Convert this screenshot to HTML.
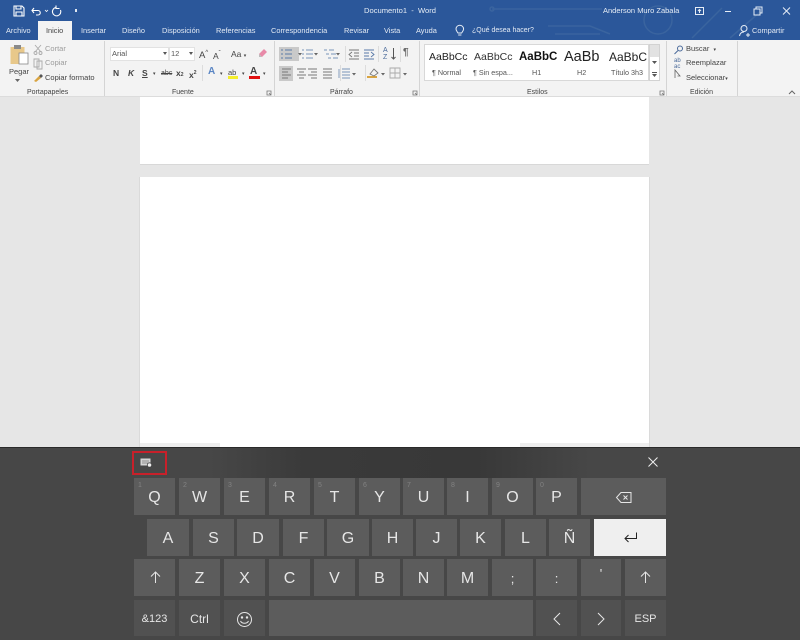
<!DOCTYPE html>
<html lang="es"><head><meta charset="utf-8"><title>Documento1 - Word</title>
<style>
*{box-sizing:border-box}
html,body{margin:0;padding:0;width:800px;height:640px;overflow:hidden;background:#e6e6e6;font-family:"Liberation Sans",sans-serif}
.a{position:absolute;white-space:nowrap}
#tb{position:absolute;left:0;top:0;width:800px;height:40px;background:#2b579a}
.t{position:absolute;top:25px;font-size:7.4px;color:#e3eaf4;line-height:11px;white-space:nowrap}
#rb{position:absolute;left:0;top:40px;width:800px;height:57px;background:#f3f3f3;border-bottom:1px solid #dcdcdc}
.s{position:absolute;top:41px;width:1px;height:55px;background:#d4d4d4}
.r{position:absolute;font-size:7.5px;color:#444;line-height:10px;white-space:nowrap}
.g{position:absolute;top:88px;font-size:7px;color:#444;line-height:10px;white-space:nowrap}
.k{position:absolute;height:37px;background:#5c5c5c;color:#e6e6e6;text-align:center;font-size:16px;line-height:39px}
.d{background:#515151}
.k i{position:absolute;left:4px;top:3px;font-size:7px;line-height:9px;font-style:normal;color:#828282}
svg{position:absolute;overflow:visible}
</style></head><body>

<div class="a" style="left:140px;top:97px;width:509px;height:68px;background:#fff;border-bottom:1px solid #d8d8d8"></div>
<div class="a" style="left:140px;top:177px;width:509px;height:270px;background:#fff"></div>
<div class="a" style="left:139px;top:177px;width:1px;height:270px;background:#dadada"></div>
<div class="a" style="left:649px;top:177px;width:1px;height:270px;background:#dadada"></div>
<div class="a" style="left:140px;top:443px;width:80px;height:4px;background:#eee"></div>
<div class="a" style="left:520px;top:443px;width:129px;height:4px;background:#eee"></div>

<div id="tb"></div>
<svg style="left:0;top:0" width="800" height="40" fill="none" stroke="#3a649f" stroke-width="1.5"><path d="M492 9H602M548 26H590L610 34M555 34H600M722 8L692 38M760 12L730 38"/><circle cx="658" cy="20" r="14"/><circle cx="492" cy="9" r="2"/></svg>
<svg style="left:13px;top:5px" width="60" height="12" fill="none" stroke="#fff" stroke-width="1.1"><path d="M1 1H9L11 3V11H1ZM3 1V4H8V1M3 11V7H9V11"/><path d="M21 3L19 5.500L21 8M19 5.500H25C28 5.500 28 10 25 10H23"/><path d="M32 5L33.500 6.500L35 5" stroke-width=".8"/><path d="M43 2.500A4.200 4.200 0 1 0 47.500 5M43 0.500V3.500H46.500"/></svg>
<div class="a" style="left:75px;top:9px;width:2px;height:3px;background:#dfe7f2"></div>
<div class="a" style="left:364px;top:5px;font-size:7.6px;line-height:11px;color:#e6edf6">Documento1 &nbsp;-&nbsp; Word</div>
<div class="a" style="left:603px;top:5px;font-size:7.5px;line-height:11px;color:#e6edf6">Anderson Muro Zabala</div>
<svg style="left:695px;top:5px" width="96" height="12" fill="none" stroke="#e6edf6" stroke-width="1"><path d="M0.500 2.500H8.500V9.500H0.500ZM4.500 8V4.500M3 6L4.500 4.500L6 6"/><path d="M30 6.500H36"/><path d="M59 4H65V10H59ZM61 4V2H67V8H65"/><path d="M88 2.500L95 9.500M95 2.500L88 9.500"/></svg>

<div class="a" style="left:38px;top:21px;width:34px;height:20px;background:#f3f3f3"></div>
<div class="t" style="left:6px">Archivo</div>
<div class="t" style="left:46px;color:#444">Inicio</div>
<div class="t" style="left:81px">Insertar</div>
<div class="t" style="left:122px">Diseño</div>
<div class="t" style="left:162px">Disposición</div>
<div class="t" style="left:216px">Referencias</div>
<div class="t" style="left:271px">Correspondencia</div>
<div class="t" style="left:344px">Revisar</div>
<div class="t" style="left:384px">Vista</div>
<div class="t" style="left:416px">Ayuda</div>
<svg style="left:455px;top:25px" width="10" height="12" fill="none" stroke="#e6edf6" stroke-width="1"><path d="M3 8C2 6.500 1 5.500 1 4A3.800 3.800 0 0 1 8.600 4C8.600 5.500 7.600 6.500 6.600 8ZM3.200 10H6.400"/></svg>
<div class="t" style="left:472px;font-size:7px">¿Qué desea hacer?</div>
<svg style="left:739px;top:25px" width="12" height="12" fill="none" stroke="#e6edf6" stroke-width="1"><circle cx="5" cy="3.500" r="3"/><path d="M0.500 11C1 8 3 7 5 7M7 10H11M9 8V12"/></svg>
<div class="t" style="left:752px">Compartir</div>

<div id="rb"></div>
<div class="s" style="left:104px"></div><div class="s" style="left:274px"></div><div class="s" style="left:419px"></div><div class="s" style="left:666px"></div><div class="s" style="left:737px"></div>

<!-- Portapapeles -->
<svg style="left:9px;top:44px" width="22" height="24"><rect x="1.500" y="3" width="14" height="17" fill="#e8c88a"/><rect x="5" y="1" width="7" height="4" fill="#8a8a8a"/><rect x="10" y="9" width="9" height="11" fill="#fff" stroke="#888" stroke-width=".8"/></svg>
<div class="r" style="left:9px;top:67px">Pegar</div>
<svg style="left:15px;top:79px" width="6" height="4"><path d="M0 0H5L2.500 3Z" fill="#666"/></svg>
<svg style="left:33px;top:44px" width="11" height="40" fill="none" stroke="#aaa" stroke-width=".9"><path d="M2 1L8 8M8 1L2 8"/><circle cx="2.500" cy="9" r="1.500"/><circle cx="7.500" cy="9" r="1.500"/><path d="M1 15H6V23H1ZM4 17H9V25H4Z"/></svg>
<div class="r" style="left:45px;top:44px;color:#9c9c9c">Cortar</div>
<div class="r" style="left:45px;top:58px;color:#9c9c9c">Copiar</div>
<svg style="left:33px;top:73px" width="11" height="10"><path d="M1 8L6 3L8 5L3 9Z" fill="#d9a441"/><path d="M6 3L8 1L10 3L8 5Z" fill="#555"/></svg>
<div class="r" style="left:45px;top:73px">Copiar formato</div>
<div class="g" style="left:27px">Portapapeles</div>

<!-- Fuente -->
<div class="a" style="left:110px;top:47px;width:59px;height:14px;background:#fff;border:1px solid #e2e2e2;font-size:7.500px;line-height:12px;padding-left:1px;color:#555">Arial</div>
<div class="a" style="left:169px;top:47px;width:26px;height:14px;background:#fff;border:1px solid #e2e2e2;font-size:7.500px;line-height:12px;padding-left:1px;color:#555">12</div>
<svg style="left:163px;top:52px" width="30" height="4" fill="#555"><path d="M0 0H4L2 3Z"/><path d="M26 0H30L28 3Z"/></svg>
<div class="r" style="left:199px;top:48px;font-size:9.500px">A<span style="font-size:6px;vertical-align:4px">^</span></div>
<div class="r" style="left:213px;top:49px;font-size:8.500px">A<span style="font-size:6px;vertical-align:4px">ˇ</span></div>
<div class="r" style="left:231px;top:49px;font-size:8.500px">Aa <span style="font-size:5px">▾</span></div>
<svg style="left:257px;top:47px" width="12" height="12"><path d="M2 7L7 2L10 5L5 10Z" fill="#e88aa8"/><path d="M2 7L5 10H2Z" fill="#bbb"/></svg>
<div class="r" style="left:113px;top:68px;font-weight:bold;font-size:8.500px">N</div>
<div class="r" style="left:128px;top:68px;font-weight:bold;font-style:italic;font-size:8.500px">K</div>
<div class="r" style="left:142px;top:68px;font-weight:bold;font-size:8.500px;text-decoration:underline">S</div>
<div class="r" style="left:153px;top:69px;font-size:5px">▾</div>
<div class="r" style="left:161px;top:69px;font-size:7px;text-decoration:line-through">abc</div>
<div class="r" style="left:176px;top:68px;font-size:8.500px;font-weight:bold">x<span style="font-size:5px">2</span></div>
<div class="r" style="left:189px;top:68px;font-size:8.500px;font-weight:bold">x<span style="font-size:5px;vertical-align:4px">2</span></div>
<div class="a" style="left:202px;top:65px;width:1px;height:16px;background:#dcdcdc"></div>
<div class="r" style="left:208px;top:67px;font-size:10px;color:#5b86c4;font-weight:bold">A</div>
<div class="r" style="left:220px;top:69px;font-size:5px">▾</div>
<div class="r" style="left:228px;top:68px;font-size:7.500px;text-decoration:underline">ab</div>
<div class="a" style="left:228px;top:76px;width:10px;height:3px;background:#f5ee2a"></div>
<div class="r" style="left:242px;top:69px;font-size:5px">▾</div>
<div class="r" style="left:250px;top:67px;font-size:10px;font-weight:bold;color:#444">A</div>
<div class="a" style="left:249px;top:76px;width:11px;height:3px;background:#e01010"></div>
<div class="r" style="left:263px;top:69px;font-size:5px">▾</div>
<div class="g" style="left:172px">Fuente</div>
<svg style="left:266px;top:90px" width="40" height="6" fill="none" stroke="#777" stroke-width=".8"><path d="M1 1H5V5H1ZM3 3L5 5"/></svg>

<!-- Parrafo -->
<div class="a" style="left:279px;top:47px;width:20px;height:14px;background:#c9c9c9"></div>
<div class="a" style="left:279px;top:66px;width:14px;height:15px;background:#c9c9c9"></div>
<svg style="left:280px;top:48px" width="140" height="33" fill="none" stroke="#777" stroke-width=".9">
<path d="M1 2H3M5 2H12M1 6H3M5 6H12M1 10H3M5 10H12" stroke="#5a7aa8"/>
<path d="M22 2H24M26 2H33M22 6H24M26 6H33M22 10H24M26 10H33" stroke="#7a94b8"/>
<path d="M44 2H47M49 2H54M46 6H49M51 6H56M48 10H51M53 10H58" stroke="#7a94b8"/>
<path d="M69 2H79M74 5H79M74 8H79M69 11H79M72 4L69 6.500L72 9"/>
<path d="M84 2H94M84 5H89M84 8H89M84 11H94M91 4L94 6.500L91 9" stroke="#5a7aa8"/>
<path d="M2 21H11M2 24H8M2 27H11M2 30H8"/><path d="M17 21H26M19 24H24M17 27H26M19 30H24"/><path d="M28 21H37M31 24H37M28 27H37M31 30H37"/><path d="M43 21H52M43 24H52M43 27H52M43 30H52"/>
<path d="M62 21H70M62 24H70M62 27H70M62 30H70M59 21V30" stroke="#7a94b8"/>
<path d="M87 29H97" stroke="#d9a441" stroke-width="2"/><path d="M90 26L94 21L98 25L94 28Z"/>
<path d="M110 20H120V30H110ZM115 20V30M110 25H120" stroke="#aaa"/>
</svg>
<svg style="left:0;top:0" width="420" height="90" fill="#666"><path d="M298 53H302L300 55.500Z M314 53H318L316 55.500Z M336 53H340L338 55.500Z M352 73H356L354 75.500Z M381 73H385L383 75.500Z M403 73H407L405 75.500Z"/></svg>
<div class="a" style="left:345px;top:46px;width:1px;height:16px;background:#dcdcdc"></div>
<div class="a" style="left:378px;top:46px;width:1px;height:16px;background:#dcdcdc"></div>
<div class="a" style="left:400px;top:46px;width:1px;height:16px;background:#dcdcdc"></div>
<div class="a" style="left:340px;top:65px;width:1px;height:16px;background:#dcdcdc"></div>
<div class="a" style="left:365px;top:65px;width:1px;height:16px;background:#dcdcdc"></div>
<div class="r" style="left:383px;top:47px;font-size:7px;line-height:7px;color:#4a6a9a">A<br>Z</div>
<svg style="left:391px;top:48px" width="5" height="12" fill="none" stroke="#555"><path d="M2.500 0V11M0.500 9L2.500 11L4.500 9"/></svg>
<div class="r" style="left:403px;top:48px;font-size:10px;font-weight:bold;color:#666">¶</div>
<div class="g" style="left:330px">Párrafo</div>
<svg style="left:412px;top:90px" width="6" height="6" fill="none" stroke="#777" stroke-width=".8"><path d="M1 1H5V5H1ZM3 3L5 5"/></svg>

<!-- Estilos -->
<div class="a" style="left:424px;top:44px;width:225px;height:37px;background:#fff;border:1px solid #d8d8d8"></div>
<div class="a" style="left:649px;top:44px;width:11px;height:37px;background:#fff;border:1px solid #d2d2d2"></div>
<div class="a" style="left:650px;top:45px;width:9px;height:12px;background:#e2e2e2"></div>
<div class="r" style="left:429px;top:51px;font-size:10.500px;line-height:13px;color:#222">AaBbCc</div>
<div class="r" style="left:474px;top:51px;font-size:10.500px;line-height:13px;color:#333">AaBbCc</div>
<div class="r" style="left:519px;top:50px;font-size:11.500px;line-height:14px;color:#111;font-weight:bold">AaBbC</div>
<div class="r" style="left:564px;top:48px;font-size:14.500px;line-height:18px;color:#222">AaBb</div>
<div class="r" style="left:609px;top:50px;font-size:12px;line-height:15px;color:#222">AaBbC</div>
<div class="r" style="left:432px;top:68px;font-size:7.200px;color:#555">¶ Normal</div>
<div class="r" style="left:473px;top:68px;font-size:7.200px;color:#555">¶ Sin espa...</div>
<div class="r" style="left:532px;top:68px;font-size:7.200px;color:#555">H1</div>
<div class="r" style="left:577px;top:68px;font-size:7.200px;color:#555">H2</div>
<div class="r" style="left:611px;top:68px;font-size:7.200px;color:#555">Título 3h3</div>
<svg style="left:652px;top:60px" width="6" height="18" fill="#555"><path d="M0 1H5L2.500 4Z M0 12H5V13H0Z M0 14H5L2.500 17Z"/></svg>
<div class="g" style="left:527px">Estilos</div>
<svg style="left:659px;top:90px" width="6" height="6" fill="none" stroke="#777" stroke-width=".8"><path d="M1 1H5V5H1ZM3 3L5 5"/></svg>

<!-- Edicion -->
<svg style="left:674px;top:45px" width="10" height="40" fill="none" stroke="#4a6a9a" stroke-width="1"><circle cx="6" cy="3.500" r="2.500"/><path d="M4 5.500L0.500 9"/><path d="M1 33V25L6 31H3.500" stroke="#666" stroke-width=".8"/></svg>
<div class="r" style="left:674px;top:58px;font-size:6px;line-height:6px;color:#4a6a9a">ab<br>ac</div>
<div class="r" style="left:686px;top:44px">Buscar &nbsp;<span style="font-size:5px">▾</span></div>
<div class="r" style="left:686px;top:58px">Reemplazar</div>
<div class="r" style="left:686px;top:73px">Seleccionar<span style="font-size:5px">▾</span></div>
<div class="g" style="left:690px">Edición</div>
<svg style="left:788px;top:90px" width="8" height="5" fill="none" stroke="#666"><path d="M1 4L4 1L7 4"/></svg>

<!-- Teclado -->
<div class="a" style="left:0;top:447px;width:800px;height:193px;background:#474747;border-top:1px solid #2a2a2a"></div>
<div class="a" style="left:210px;top:448px;width:380px;height:30px;background:linear-gradient(90deg,#474747,#3a3a3a 25%,#383838 70%,#474747)"></div>
<div class="a" style="left:132px;top:451px;width:35px;height:24px;border:2px solid #c8202a"></div>
<svg style="left:140px;top:458px" width="13" height="10"><rect x="0.500" y="0.500" width="10" height="7" fill="#d4d4d4"/><path d="M2 3H9M2 5H9" stroke="#777" stroke-width=".8"/><circle cx="9.500" cy="7" r="2.200" fill="#eee" stroke="#444" stroke-width=".8"/></svg>
<svg style="left:648px;top:457px" width="10" height="10" fill="none" stroke="#eee" stroke-width="1"><path d="M.5 .5L9.500 9.500M9.500 .5L.5 9.500"/></svg>

<div class="k" style="left:134px;top:478px;width:41px"><i>1</i>Q</div>
<div class="k" style="left:179px;top:478px;width:41px"><i>2</i>W</div>
<div class="k" style="left:224px;top:478px;width:41px"><i>3</i>E</div>
<div class="k" style="left:269px;top:478px;width:41px"><i>4</i>R</div>
<div class="k" style="left:314px;top:478px;width:41px"><i>5</i>T</div>
<div class="k" style="left:359px;top:478px;width:41px"><i>6</i>Y</div>
<div class="k" style="left:403px;top:478px;width:41px"><i>7</i>U</div>
<div class="k" style="left:447px;top:478px;width:41px"><i>8</i>I</div>
<div class="k" style="left:492px;top:478px;width:41px"><i>9</i>O</div>
<div class="k" style="left:536px;top:478px;width:41px"><i>0</i>P</div>
<div class="k" style="left:581px;top:478px;width:85px"></div>
<svg style="left:616px;top:492px" width="16" height="11" fill="none" stroke="#e6e6e6" stroke-width="1"><path d="M5 .5H15V10.500H5L.5 5.500ZM7.500 3.500L11.500 7.500M11.500 3.500L7.500 7.500"/></svg>

<div class="k" style="left:147px;top:519px;width:42px">A</div>
<div class="k" style="left:193px;top:519px;width:41px">S</div>
<div class="k" style="left:237px;top:519px;width:42px">D</div>
<div class="k" style="left:283px;top:519px;width:41px">F</div>
<div class="k" style="left:327px;top:519px;width:42px">G</div>
<div class="k" style="left:372px;top:519px;width:41px">H</div>
<div class="k" style="left:416px;top:519px;width:41px">J</div>
<div class="k" style="left:460px;top:519px;width:41px">K</div>
<div class="k" style="left:505px;top:519px;width:41px">L</div>
<div class="k" style="left:549px;top:519px;width:41px">Ñ</div>
<div class="k" style="left:594px;top:519px;width:72px;background:#efefef"></div>
<svg style="left:624px;top:532px" width="14" height="11" fill="none" stroke="#222" stroke-width="1"><path d="M12.500 .5V6.500H1M4.500 3L1 6.500L4.500 10"/></svg>

<div class="k" style="left:134px;top:559px;width:41px"></div>
<div class="k" style="left:179px;top:559px;width:41px">Z</div>
<div class="k" style="left:224px;top:559px;width:41px">X</div>
<div class="k" style="left:269px;top:559px;width:41px">C</div>
<div class="k" style="left:314px;top:559px;width:41px">V</div>
<div class="k" style="left:359px;top:559px;width:41px">B</div>
<div class="k" style="left:403px;top:559px;width:41px">N</div>
<div class="k" style="left:447px;top:559px;width:41px">M</div>
<div class="k" style="left:492px;top:559px;width:41px;font-size:13px">;</div>
<div class="k" style="left:536px;top:559px;width:41px;font-size:13px">:</div>
<div class="k" style="left:581px;top:559px;width:40px;font-size:13px;line-height:30px">'</div>
<div class="k" style="left:625px;top:559px;width:41px"></div>
<svg style="left:150px;top:571px" width="11" height="12" fill="none" stroke="#e6e6e6" stroke-width="1"><path d="M5.500 12V1M1 5.500L5.500 1L10 5.500"/></svg>
<svg style="left:640px;top:571px" width="11" height="12" fill="none" stroke="#e6e6e6" stroke-width="1"><path d="M5.500 12V1M1 5.500L5.500 1L10 5.500"/></svg>

<div class="k d" style="left:134px;top:600px;width:41px;height:36px;font-size:11px;line-height:38px">&amp;123</div>
<div class="k d" style="left:179px;top:600px;width:41px;height:36px;font-size:12px;line-height:38px">Ctrl</div>
<div class="k d" style="left:224px;top:600px;width:41px;height:36px"></div>
<svg style="left:237px;top:612px" width="15" height="15" fill="none" stroke="#e6e6e6" stroke-width="1"><circle cx="7.500" cy="7.500" r="7"/><circle cx="5" cy="5.500" r=".7" fill="#eee"/><circle cx="10" cy="5.500" r=".7" fill="#eee"/><path d="M3.500 9C5 12 10 12 11.500 9"/></svg>
<div class="k" style="left:269px;top:600px;width:264px;height:36px"></div>
<div class="k d" style="left:536px;top:600px;width:41px;height:36px"></div>
<div class="k d" style="left:581px;top:600px;width:40px;height:36px"></div>
<svg style="left:553px;top:613px" width="8" height="12" fill="none" stroke="#e6e6e6" stroke-width="1"><path d="M7 0L1 6L7 12"/></svg>
<svg style="left:597px;top:613px" width="8" height="12" fill="none" stroke="#e6e6e6" stroke-width="1"><path d="M1 0L7 6L1 12"/></svg>
<div class="k d" style="left:625px;top:600px;width:41px;height:36px;font-size:11px;line-height:38px">ESP</div>
</body></html>
